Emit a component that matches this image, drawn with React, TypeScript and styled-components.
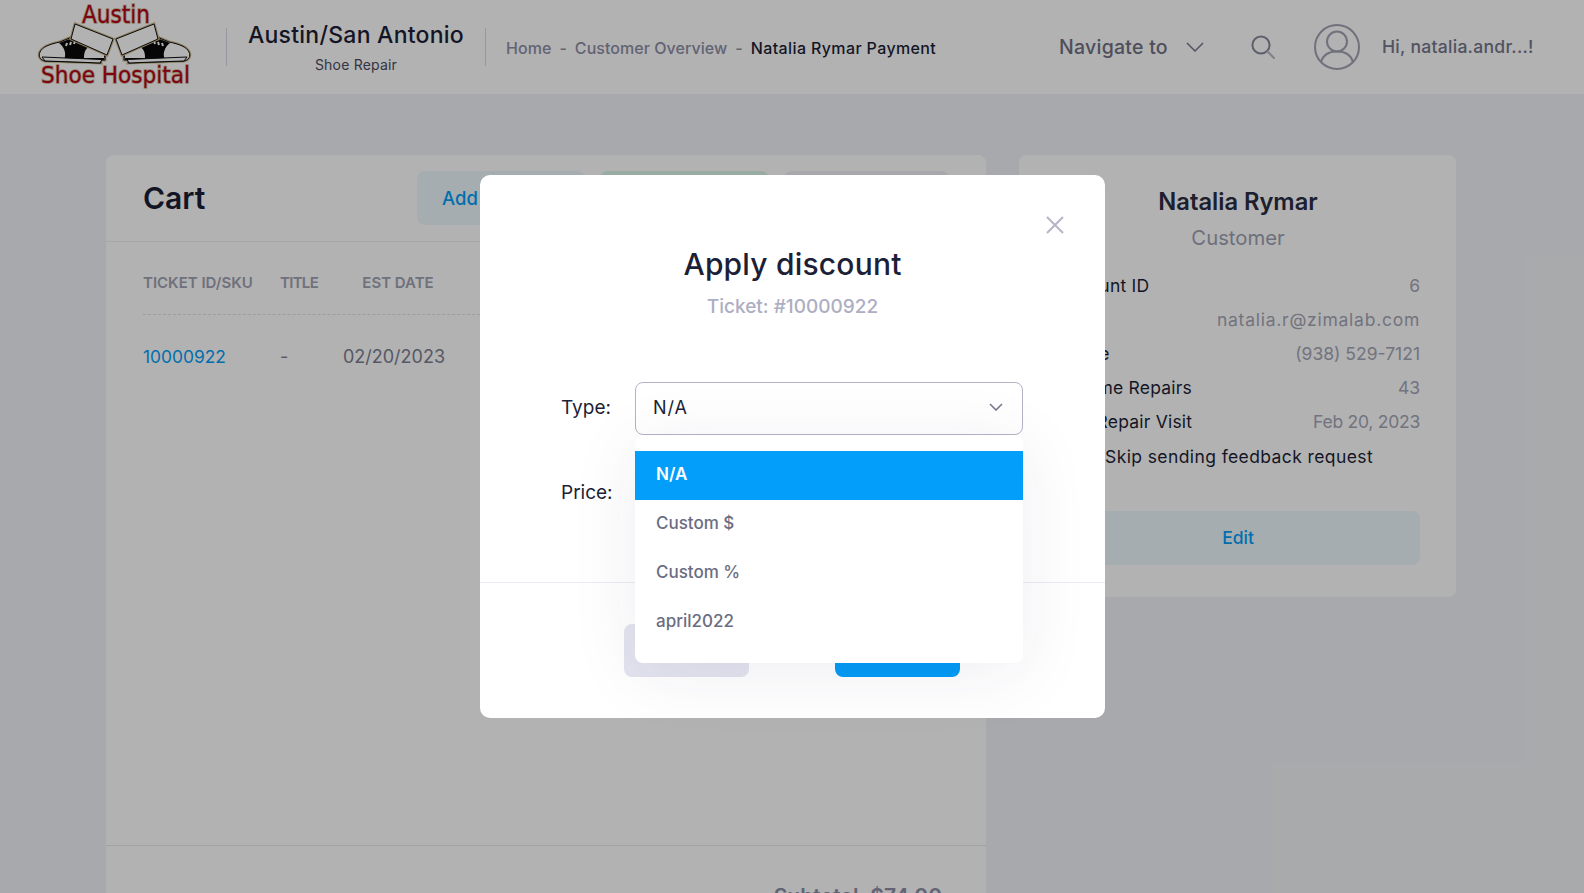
import React from "react";
import styled, { createGlobalStyle } from "styled-components";

const Global = createGlobalStyle`
  html, body { margin: 0; padding: 0; height: 100%; overflow: hidden; background: #f1f3f6; }
  body { font-family: Inter, "Open Sans", "Liberation Sans", sans-serif; color: #1c1f37; }
  * { box-sizing: border-box; }
`;
const Page = styled.div`position: relative; width: 1584px; height: 893px; overflow: hidden; background: #f1f3f6;`;
const Header = styled.header`display: flex; align-items: center; height: 94px; padding-left: 30px; background: #fff;`;
const LogoBox = styled.svg`display: block; flex: none; width: 170px; height: 94px;`;
const VRule = styled.span<{ $gap?: number }>`flex: none; width: 1px; height: 38px; background: #d8d9e3; margin-left: ${p => p.$gap ?? 0}px;`;
const Brand = styled.div`display: flex; flex-direction: column; align-items: center; width: 258px; margin-top: 2px;`;
const BrandTitle = styled.div`font-size: 23px; font-weight: 500; line-height: 34px; color: #1c1f37; letter-spacing: .25px; white-space: nowrap;`;
const BrandSub = styled.div`font-size: 14px; line-height: 26px; color: #4a4c5e; letter-spacing: .2px;`;
const Crumbs = styled.nav`display: flex; gap: 8px; margin-left: 20px; font-size: 16px; font-weight: 500; width: 553px; margin-top: 2px; white-space: nowrap;`;
const Crumb = styled.span<{ $current?: boolean }>`color: ${p => (p.$current ? "#1c1f37" : "#8d8fa6")}; letter-spacing: ${p => (p.$current ? ".38px" : ".05px")};`;
const NavTo = styled.div`display: flex; align-items: center; font-size: 19.5px; font-weight: 500; color: #6f7184; width: 192px; white-space: nowrap; letter-spacing: .25px;`;
const Chev = styled.svg`margin-left: 18px; flex: none;`;
const SearchIcon = styled.svg`flex: none; margin-right: 39px;`;
const Avatar = styled.svg`flex: none;`;
const Hello = styled.div`margin-left: 22px; margin-top: -1px; font-size: 17.6px; font-weight: 500; color: #74768a; white-space: nowrap; letter-spacing: .25px;`;

const Main = styled.main`display: flex; align-items: flex-start; gap: 33px; padding: 61px 0 0 106px;`;
const Card = styled.section`background: #fff; border-radius: 8px;`;
const CartCard = styled(Card)`width: 880px; height: 780px; display: flex; flex-direction: column;`;
const CartHead = styled.div`display: flex; align-items: center; height: 87px; padding: 0 37px; border-bottom: 1px solid #eeeff3;`;
const CartTitle = styled.h1`margin: 0; font-size: 30px; font-weight: 600; color: #1c1f37; width: 276px;`;
const HeadBtns = styled.div`display: flex; gap: 15px; margin-top: -1px;`;
const Btn = styled.div<{ $bg: string; $fg: string; $w: number }>`
  display: flex; align-items: center; justify-content: flex-start; height: 54px; width: ${p => p.$w}px; padding-left: 25px;
  border-radius: 8px; background: ${p => p.$bg}; color: ${p => p.$fg}; font-size: 18.5px; font-weight: 500; white-space: nowrap;
`;
const TableWrap = styled.div`flex: 1; padding: 0 37px;`;
const Row = styled.div<{ $head?: boolean }>`
  display: grid; grid-template-columns: 137px 60px 108px; align-items: center;
  height: ${p => (p.$head ? "73px" : "82px")};
  ${p => p.$head && "padding-top: 8px; border-bottom: 1px dashed #e0e1e8;"}
`;
const HeadCell = styled.div<{ $shift?: boolean; $ls?: number }>`font-size: 15px; font-weight: 600; color: #a0a2b2; white-space: nowrap; letter-spacing: ${p => p.$ls ?? 0}px; ${p => p.$shift && "text-align: center; padding-left: 8px;"}`;
const Cell = styled.div<{ $link?: boolean; $center?: boolean }>`font-size: ${p => (p.$link ? "17.4px" : "18px")}; color: ${p => (p.$link ? "#029ef9" : "#7c7e92")}; white-space: nowrap; ${p => p.$center && "text-align: center;"}`;
const CartFoot = styled.div`height: 90px; border-top: 1px solid #e8e9ee; padding: 38px 44px 0 0; text-align: right; font-size: 21px; line-height: 26px; font-weight: 600; color: #8d8fa6; white-space: nowrap;`;

const InfoCard = styled(Card)`width: 437px; height: 442px; padding: 30px 36px 0 37px;`;
const InfoName = styled.h2`margin: 0; text-align: center; font-size: 23.7px; line-height: 34px; font-weight: 600; color: #2b2d42;`;
const InfoRole = styled.div`margin-top: 1px; text-align: center; font-size: 20.3px; line-height: 36px; font-weight: 400; color: #9d9fb2; margin-bottom: 12px;`;
const InfoRow = styled.div`display: flex; justify-content: space-between; height: 34.2px; align-items: center; font-size: 17.5px; white-space: nowrap;`;
const InfoLabel = styled.span`color: #1c1f37; letter-spacing: .2px;`;
const InfoValue = styled.span<{ $ls?: number }>`color: #a4a6b6; letter-spacing: ${p => p.$ls ?? 0}px;`;
const CheckRow = styled.label`display: flex; align-items: center; gap: 29px; height: 35px; font-size: 17.5px; color: #1c1f37; white-space: nowrap; letter-spacing: .4px;`;
const CheckBoxMark = styled.span`flex: none; width: 20px; height: 20px; border: 1px solid #b8b9c8; border-radius: 4px;`;
const EditBtn = styled.div`display: flex; align-items: center; justify-content: center; height: 54px; margin-top: 37px; border-radius: 8px; background: #ecf8fe; color: #029ef9; font-size: 17.5px; font-weight: 500;`;

const Overlay = styled.div`position: absolute; inset: 0; background: rgba(0, 0, 0, .3);`;
const Modal = styled.div`position: absolute; left: 480px; top: 175px; width: 625px; height: 543px; background: #fff; border-radius: 10px; display: flex; flex-direction: column;`;
const Close = styled.svg`position: absolute; left: 566px; top: 41px;`;
const ModalTitle = styled.h3`margin: 68px 0 0; text-align: center; font-size: 30px; line-height: 42px; font-weight: 500; color: #1c1f37; letter-spacing: .2px;`;
const ModalSub = styled.div`margin-top: 7px; text-align: center; font-size: 19px; line-height: 30px; font-weight: 500; color: #adaec2;`;
const Form = styled.div`display: flex; flex-direction: column; gap: 33px; padding: 60px 82px 0 81px; height: 261px; border-bottom: 1px solid #ebecf1; flex: none;`;
const Field = styled.div`position: relative; display: flex; align-items: center; height: 52px; flex: none;`;
const FieldLabel = styled.label`flex: none; width: 74px; font-size: 19px; color: #1c1f37; padding-bottom: 1px;`;
const Select = styled.div`flex: 1; display: flex; align-items: center; justify-content: space-between; height: 53px; padding: 0 19px 2px 17px; border: 1px solid #b3b3c8; border-radius: 8px; font-size: 18px; color: #1c1f37; letter-spacing: 1px;`;
const Input = styled.div`flex: 1; height: 52px; border: 1px solid #b3b3c8; border-radius: 8px;`;
const Menu = styled.ul`
  position: absolute; left: 74px; top: 53px; width: 388px; height: 228px; margin: 0; padding: 16px 0 0; list-style: none;
  background: #fff; border-radius: 8px; z-index: 2; box-shadow: 0 10px 70px rgba(40, 40, 90, .08);
`;
const MenuItem = styled.li<{ $active?: boolean }>`
  display: flex; align-items: center; height: 49px; padding: 0 0 3px 21px; font-size: 17px; white-space: nowrap;
  font-weight: ${p => (p.$active ? 600 : 500)};
  background: ${p => (p.$active ? "#029ef9" : "transparent")};
  color: ${p => (p.$active ? "#fff" : "#6b6d82")};
`;
const Foot = styled.div`display: flex; justify-content: center; gap: 86px; padding-top: 41px; padding-right: 1px;`;
const FootBtn = styled.div<{ $primary?: boolean }>`
  display: flex; align-items: center; justify-content: center; width: 125px; height: 53px; border-radius: 8px; font-size: 17px; font-weight: 500;
  background: ${p => (p.$primary ? "#049cf6" : "#e3e4ef")}; color: ${p => (p.$primary ? "#fff" : "#6b6d82")};
`;

const Shoe = () => (
  <>
    <path d="M10 52 C12 47 20 44 30 42 L42 37 L56 45 L75 55 L75 60 L70 60 L71 63 L45 62 L15 61 C10 60 8 56 10 52Z" fill="#fff" stroke="#cdb98a" strokeWidth="3" />
    <path d="M10 52 C12 47 20 44 30 42 L42 37 L56 45 L75 55 L75 60 L70 60 L71 63 L45 62 L15 61 C10 60 8 56 10 52Z" fill="#fff" stroke="#0a0a0a" strokeWidth="1" />
    <path d="M29 43 L42 38 L56 46 L75 56 L74 60 L34 60 C37 53 34 47 29 43Z" fill="#0a0a0a" />
    <path d="M54 57 C54 48 60 45 65 46 L74 51 L74 58 L54 58Z" fill="#fff" />
    <path d="M12 57 L72 59.5 L70 63 L45 62 L15 61Z" fill="#fff" stroke="#0a0a0a" strokeWidth="1" />
    <path d="M36 46l1-3M40 45l1-3M44 44l1-3" stroke="#fff" strokeWidth="2" />
    <path d="M45 24 L83 39 L77 55 L41 39Z" fill="#fff" stroke="#cdb98a" strokeWidth="3" />
    <path d="M45 24 L83 39 L77 55 L41 39Z" fill="#fff" stroke="#111" strokeWidth="1" />
  </>
);

const Logo = () => (
  <LogoBox viewBox="0 0 170 94">
    <Shoe />
    <g transform="translate(169 0) scale(-1 1)"><Shoe /></g>
    <g fontFamily="'DejaVu Sans', sans-serif" fill="#b8001f" stroke="#cdb98a" strokeWidth="1.6" style={{ paintOrder: "stroke" }}>
      <text x="52" y="23" fontSize="24" textLength="68" lengthAdjust="spacingAndGlyphs">Austin</text>
      <text x="11" y="83" fontSize="23.5" textLength="149" lengthAdjust="spacingAndGlyphs">Shoe Hospital</text>
    </g>
  </LogoBox>
);

export default function App() {
  return (
    <Page>
      <Global />
      <Header>
        <Logo />
        <VRule $gap={26} />
        <Brand>
          <BrandTitle>Austin/San Antonio</BrandTitle>
          <BrandSub>Shoe Repair</BrandSub>
        </Brand>
        <VRule />
        <Crumbs>
          <Crumb>Home</Crumb><Crumb>-</Crumb><Crumb>Customer Overview</Crumb><Crumb>-</Crumb><Crumb $current>Natalia Rymar Payment</Crumb>
        </Crumbs>
        <NavTo>
          Navigate to
          <Chev width="18" height="10" viewBox="0 0 18 10" fill="none" stroke="#77798c" strokeWidth="1.5"><path d="M1 1l8 8 8-8" /></Chev>
        </NavTo>
        <SearchIcon width="24" height="24" viewBox="0 0 24 24" fill="none">
          <circle cx="10" cy="10" r="8.6" stroke="#868899" strokeWidth="2" />
          <path d="M16.5 16.5L23 23" stroke="#b9bac5" strokeWidth="2" strokeLinecap="round" />
        </SearchIcon>
        <Avatar width="46" height="46" viewBox="0 0 46 46" fill="none" stroke="#a2a3b4" strokeWidth="2">
          <circle cx="23" cy="23" r="22" />
          <circle cx="23" cy="17.5" r="10" />
          <path d="M7 38 C9 31 15 27.5 23 27.5 C31 27.5 37 31 39 38" />
        </Avatar>
        <Hello>Hi, natalia.andr...!</Hello>
      </Header>
      <Main>
        <CartCard>
          <CartHead>
            <CartTitle>Cart</CartTitle>
            <HeadBtns>
              <Btn $bg="#ecf8fe" $fg="#029ef9" $w={168}>Add Product</Btn>
              <Btn $bg="#dcf6ea" $fg="#27ae60" $w={169}>Add Ticket</Btn>
              <Btn $bg="#f1f0f7" $fg="#8d8fa6" $w={165}>Discount</Btn>
            </HeadBtns>
          </CartHead>
          <TableWrap>
            <Row $head>
              <HeadCell>TICKET ID/SKU</HeadCell><HeadCell $ls={-0.7}>TITLE</HeadCell><HeadCell $shift>EST DATE</HeadCell>
            </Row>
            <Row>
              <Cell $link>10000922</Cell><Cell>-</Cell><Cell $center>02/20/2023</Cell>
            </Row>
          </TableWrap>
          <CartFoot>Subtotal: $74.00</CartFoot>
        </CartCard>
        <InfoCard>
          <InfoName>Natalia Rymar</InfoName>
          <InfoRole>Customer</InfoRole>
          <InfoRow><InfoLabel>Account ID</InfoLabel><InfoValue>6</InfoValue></InfoRow>
          <InfoRow><InfoLabel>Email</InfoLabel><InfoValue $ls={.75}>natalia.r@zimalab.com</InfoValue></InfoRow>
          <InfoRow><InfoLabel>Phone</InfoLabel><InfoValue>(938) 529-7121</InfoValue></InfoRow>
          <InfoRow><InfoLabel>Lifetime Repairs</InfoLabel><InfoValue>43</InfoValue></InfoRow>
          <InfoRow><InfoLabel>Last Repair Visit</InfoLabel><InfoValue $ls={-.25}>Feb 20, 2023</InfoValue></InfoRow>
          <CheckRow><CheckBoxMark />Skip sending feedback request</CheckRow>
          <EditBtn>Edit</EditBtn>
        </InfoCard>
      </Main>
      <Overlay />
      <Modal>
        <Close width="18" height="18" viewBox="0 0 18 18" fill="none" stroke="#b4b5c6" strokeWidth="2"><path d="M1 1l16 16M17 1L1 17" /></Close>
        <ModalTitle>Apply discount</ModalTitle>
        <ModalSub>Ticket: #10000922</ModalSub>
        <Form>
          <Field>
            <FieldLabel>Type:</FieldLabel>
            <Select>
              N/A
              <svg width="14" height="8" viewBox="0 0 14 8" fill="none" stroke="#777990" strokeWidth="1.6"><path d="M1 1l6 6 6-6" /></svg>
            </Select>
            <Menu>
              <MenuItem $active>N/A</MenuItem>
              <MenuItem>Custom $</MenuItem>
              <MenuItem>Custom %</MenuItem>
              <MenuItem>april2022</MenuItem>
            </Menu>
          </Field>
          <Field>
            <FieldLabel>Price:</FieldLabel>
            <Input />
          </Field>
        </Form>
        <Foot>
          <FootBtn>Cancel</FootBtn>
          <FootBtn $primary>Apply</FootBtn>
        </Foot>
      </Modal>
    </Page>
  );
}
